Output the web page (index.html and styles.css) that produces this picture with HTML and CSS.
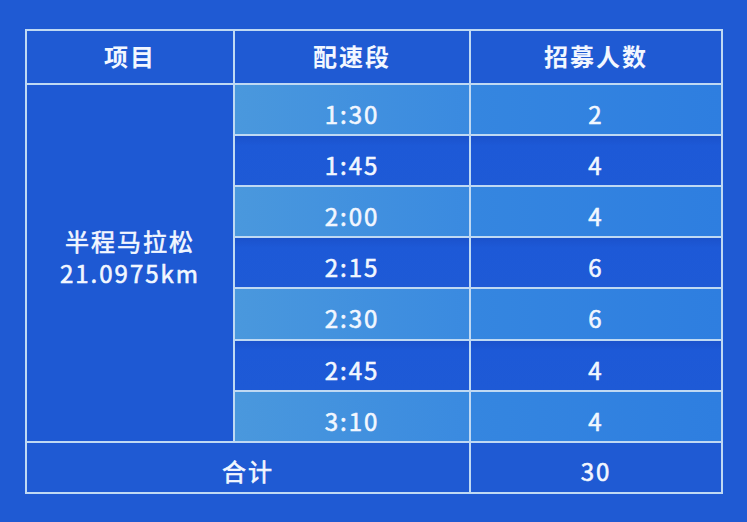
FILE: index.html
```html
<!DOCTYPE html>
<html lang="zh-CN">
<head>
<meta charset="utf-8">
<title>半程马拉松配速员招募</title>
<link rel="stylesheet" href="styles.css">
</head>
<body>
<div class="page">
  <table class="pace">
    <colgroup>
      <col class="c1"><col class="c2"><col class="c3">
    </colgroup>
    <thead>
      <tr class="head">
        <th>项目</th>
        <th>配速段</th>
        <th>招募人数</th>
      </tr>
    </thead>
    <tbody>
      <tr class="light">
        <td class="event" rowspan="7">半程马拉松<br>21.0975km</td>
        <td class="pace-cell">1:30</td>
        <td class="num">2</td>
      </tr>
      <tr class="dark"><td class="pace-cell">1:45</td><td class="num">4</td></tr>
      <tr class="light"><td class="pace-cell">2:00</td><td class="num">4</td></tr>
      <tr class="dark"><td class="pace-cell">2:15</td><td class="num">6</td></tr>
      <tr class="light tall"><td class="pace-cell">2:30</td><td class="num">6</td></tr>
      <tr class="dark"><td class="pace-cell">2:45</td><td class="num">4</td></tr>
      <tr class="light"><td class="pace-cell">3:10</td><td class="num">4</td></tr>
    </tbody>
    <tfoot>
      <tr class="total">
        <td colspan="2">合计</td>
        <td>30</td>
      </tr>
    </tfoot>
  </table>
</div>
</body>
</html>
```
FILE: styles.css
```css
html, body {
  margin: 0;
  padding: 0;
  background: #1f5ad3;
}
.page {
  width: 747px;
  height: 522px;
  padding: 29px 0 0 25px;
  box-sizing: border-box;
  background: #1f5ad3;
}
.pace {
  border-collapse: collapse;
  table-layout: fixed;
  width: 696px;
  font-family: "Noto Sans CJK SC", "Noto Sans", sans-serif;
  color: #f2f7ff;
  font-size: 24px;
  letter-spacing: 2px;
}
.c1 { width: 208px; }
.c2 { width: 236px; }
.c3 { width: 252px; }
.pace th, .pace td {
  border: 2px solid #bfd9f3;
  text-align: center;
  vertical-align: middle;
  padding: 0;
  line-height: 32px;
}
.pace th {
  font-weight: 700;
  height: 54px;
  padding-bottom: 2px;
  box-sizing: border-box;
}
.pace td {
  font-weight: 400;
  -webkit-text-stroke: 0.6px #f2f7ff;
  height: 51px;
  box-sizing: border-box;
  padding-top: 8px;
}
.pace tr.tall td { height: 52px; }
.pace td.event {
  background: #1e59d3;
  padding-top: 0;
  padding-bottom: 12px;
  line-height: 32px;
}
.light .pace-cell {
  background: linear-gradient(90deg, #4a98dd 0%, #3a8ae0 100%);
}
.light .num {
  background: linear-gradient(90deg, #3586e0 0%, #2e7ee0 100%);
}
.dark .pace-cell, .dark .num {
  background: linear-gradient(180deg, #1b52cc 0%, #1d59d7 20%, #1e5ad6 100%);
}
.total td {
  background: #1f5ad3;
  padding-top: 6px;
}
```
